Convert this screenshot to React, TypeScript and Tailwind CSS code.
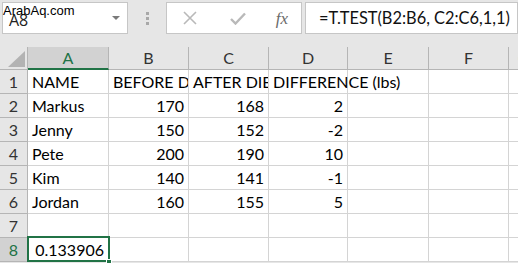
import React from "react";

const COLS = ["A", "B", "C", "D", "E", "F", "G"];
const WIDTHS = [81, 80, 80, 79, 81, 80, 30];

type Cell = { v: string; right?: boolean; overflow?: boolean };

const rows: (Cell | null)[][] = [
  [{ v: "NAME" }, { v: "BEFORE DIET" }, { v: "AFTER DIET" }, { v: "DIFFERENCE (lbs)", overflow: true }, null, null, null],
  [{ v: "Markus" }, { v: "170", right: true }, { v: "168", right: true }, { v: "2", right: true }, null, null, null],
  [{ v: "Jenny" }, { v: "150", right: true }, { v: "152", right: true }, { v: "-2", right: true }, null, null, null],
  [{ v: "Pete" }, { v: "200", right: true }, { v: "190", right: true }, { v: "10", right: true }, null, null, null],
  [{ v: "Kim" }, { v: "140", right: true }, { v: "141", right: true }, { v: "-1", right: true }, null, null, null],
  [{ v: "Jordan" }, { v: "160", right: true }, { v: "155", right: true }, { v: "5", right: true }, null, null, null],
  [null, null, null, null, null, null, null],
  [{ v: "0.133906", right: true }, null, null, null, null, null, null],
];

const font = { fontFamily: "Lato, 'Open Sans', sans-serif" };

export default function App() {
  return (
    <div className="relative w-[518px] h-[263px] overflow-hidden bg-[#e6e6e6] text-black" style={font}>
      {/* Formula bar */}
      <div className="flex items-start h-[47px] pt-[2px]">
        <div className="ml-[2px] w-[126px] h-[32px] bg-white border border-[#c6c6c6] flex items-center justify-between pl-[6px] pr-[7px]">
          <span className="text-[16px] text-[#222] leading-none mt-[3px]" style={{ fontFamily: "'Open Sans', sans-serif" }}>A8</span>
          <svg width="8" height="5" viewBox="0 0 8 5"><path d="M0 0 L8 0 L4 4 Z" fill="#7a7a7a" /></svg>
        </div>
        <div className="w-[38px] h-[32px] flex flex-col items-center justify-center gap-[2px]">
          <div className="w-[3px] h-[3px] bg-[#a8a8a8]" />
          <div className="w-[3px] h-[3px] bg-[#a8a8a8]" />
          <div className="w-[3px] h-[3px] bg-[#a8a8a8]" />
        </div>
        <div className="w-[136px] h-[32px] bg-white border border-[#c6c6c6] flex items-center">
          <div className="w-[44px] flex justify-center ml-[1px]">
            <svg width="14" height="14" viewBox="0 0 14 14"><path d="M1 1 L13 13 M13 1 L1 13" stroke="#b9b9b9" strokeWidth="1.6" /></svg>
          </div>
          <div className="w-[52px] flex justify-center">
            <svg width="16" height="13" viewBox="0 0 16 13"><path d="M1 7 L5.5 11.5 L15 1.5" stroke="#b9b9b9" strokeWidth="2.4" fill="none" /></svg>
          </div>
          <div className="w-[36px] flex justify-center">
            <span className="italic text-[17px] text-[#6a6a6a] leading-none" style={{ fontFamily: "'Liberation Serif', serif" }}>fx</span>
          </div>
        </div>
        <div className="ml-[3px] flex-1 h-[32px] bg-white border border-[#c6c6c6] flex items-center pl-[13px]">
          <span className="text-[16.4px] text-[#111] whitespace-nowrap leading-none">=T.TEST(B2:B6, C2:C6,1,1)</span>
        </div>
      </div>

      {/* Column headers */}
      <div className="flex h-[23px]">
        <div className="w-[28px] h-full border-r border-b border-[#b5b5b5] relative shrink-0">
          <svg className="absolute left-[8px] top-[4px]" width="17" height="16" viewBox="0 0 17 16"><path d="M17 0 L17 16 L0 16 Z" fill="#b3b3b3" /></svg>
        </div>
        {COLS.map((c, i) => (
          <div
            key={c}
            className={
              i === 0
                ? "h-full shrink-0 flex items-center justify-center text-[16px] text-[#217346] bg-[#d2d2d2] border-r border-[#b5b5b5] border-b-2 border-b-[#217346]"
                : "h-full shrink-0 flex items-center justify-center text-[16px] text-[#333] border-r border-b border-[#b5b5b5]"
            }
            style={{ width: WIDTHS[i] }}
          >
            {c}
          </div>
        ))}
      </div>

      {/* Grid */}
      <div className="flex flex-col">
        {rows.map((r, ri) => (
          <div key={ri} className="flex h-[24px]">
            <div
              className={
                ri === 7
                  ? "w-[28px] shrink-0 h-full flex items-center justify-center text-[16px] text-[#217346] bg-[#d2d2d2] border-r border-b border-[#b5b5b5]"
                  : "w-[28px] shrink-0 h-full flex items-center justify-center text-[16px] text-[#333] border-r border-b border-[#b5b5b5]"
              }
            >
              {ri + 1}
            </div>
            {r.map((cell, ci) => {
              const sel = ri === 7 && ci === 0;
              return (
                <div
                  key={ci}
                  className={
                    "relative h-full shrink-0 bg-white border-r border-b border-[#d4d4d4] flex items-center text-[16px] whitespace-nowrap " +
                    (sel ? "overflow-visible z-20 " : cell && cell.overflow ? "overflow-visible z-10 " : "overflow-hidden ") +
                    (cell && cell.right ? "justify-end pr-[4px]" : "pl-[4px]")
                  }
                  style={{ width: WIDTHS[ci] }}
                >
                  {cell ? cell.v : null}
                  {sel ? (
                    <>
                      <div className="absolute left-[-1px] top-[-2px] right-[-2px] bottom-[-1px] border-2 border-[#217346] pointer-events-none" />
                      <div className="absolute right-[-4px] bottom-[-4px] w-[6px] h-[6px] bg-[#217346] border border-white" />
                    </>
                  ) : null}
                </div>
              );
            })}
          </div>
        ))}
      </div>

      <div className="absolute left-[3px] top-[4px] text-[13px] leading-none text-black" style={{ fontFamily: "'Liberation Sans', Arial, sans-serif" }}>
        ArabAq.com
      </div>
    </div>
  );
}
